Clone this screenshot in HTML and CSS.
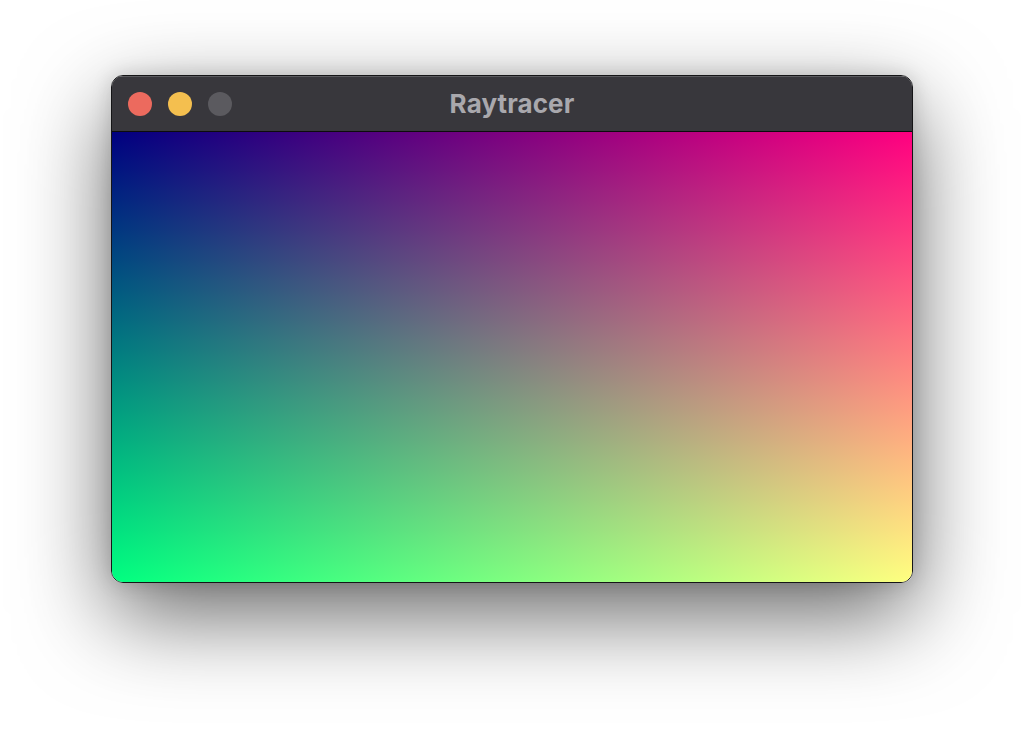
FILE: index.html
```html
<!DOCTYPE html>
<html>
<head>
<meta charset="utf-8">
<title>Raytracer</title>
<link rel="stylesheet" href="styles.css">
</head>
<body>
<div class="window">
  <div class="titlebar">
    <div class="lights">
      <span class="light close"></span>
      <span class="light minimize"></span>
      <span class="light zoom"></span>
    </div>
    <div class="title">Raytracer</div>
  </div>
  <div class="canvas"></div>
</div>
</body>
</html>
```
FILE: styles.css
```css
html, body {
  margin: 0;
  padding: 0;
  background: #ffffff;
  width: 1024px;
  height: 730px;
  overflow: hidden;
}
body {
  display: flex;
  align-items: flex-start;
  padding: 75px 0 0 111px;
  box-sizing: border-box;
}
.window {
  width: 800px;
  border: 1px solid #151517;
  border-radius: 12px;
  overflow: hidden;
  box-shadow: 0 32px 90px rgba(0, 0, 0, 0.6), 0 0 20px rgba(0,0,0,0.15);
  display: flex;
  flex-direction: column;
}
.titlebar {
  height: 55px;
  background: #38373c;
  border-bottom: 1px solid #0c0c0d;
  box-shadow: inset 0 1px 0 rgba(255,255,255,0.18);
  display: flex;
  align-items: center;
  position: relative;
  padding-left: 16px;
}
.lights {
  display: flex;
  gap: 16px;
}
.light {
  width: 24px;
  height: 24px;
  border-radius: 50%;
  display: block;
}
.close { background: #ec6a5e; }
.minimize { background: #f4bf4f; }
.zoom { background: #5b5a5f; }
.title {
  position: absolute;
  left: 0;
  right: 0;
  top: 0;
  bottom: 0;
  display: flex;
  align-items: center;
  justify-content: center;
  font-family: Inter, "Liberation Sans", sans-serif;
  font-weight: 700;
  font-size: 26px;
  letter-spacing: 0.1px;
  color: #a9a8ad;
  pointer-events: none;
}
.canvas {
  height: 450px;
  background-image:
    linear-gradient(to right, rgb(0, 0, 128), rgb(255, 0, 128)),
    linear-gradient(to bottom, rgb(0, 0, 0), rgb(0, 255, 0));
  background-blend-mode: lighten;
}
```
